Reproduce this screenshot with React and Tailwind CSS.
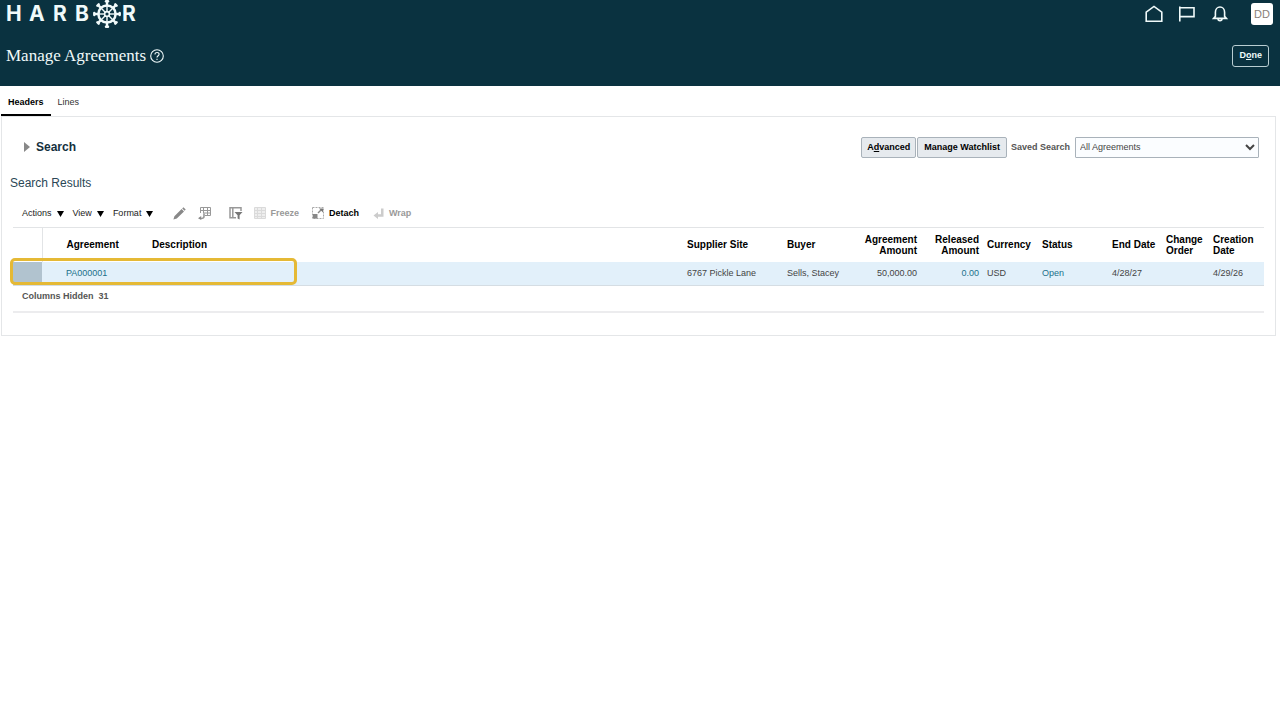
import { clsx } from 'clsx';

const COLUMNS = [
  { key: 'agreement', label: 'Agreement', width: 'w-[106px]', pad: 'pl-6', link: true },
  { key: 'description', label: 'Description' },
  { key: 'site', label: 'Supplier Site', width: 'w-[100px]' },
  { key: 'buyer', label: 'Buyer', width: 'w-[68px]' },
  { key: 'amount', label: 'Agreement Amount', width: 'w-[70px]', right: true },
  { key: 'released', label: 'Released Amount', width: 'w-[62px]', right: true, link: true },
  { key: 'currency', label: 'Currency', width: 'w-[55px]' },
  { key: 'status', label: 'Status', width: 'w-[70px]', link: true },
  { key: 'endDate', label: 'End Date', width: 'w-[54px]' },
  { key: 'changeOrder', label: 'Change Order', width: 'w-[47px]' },
  { key: 'created', label: 'Creation Date', width: 'w-[55px]' },
];

const AGREEMENTS = [
  {
    agreement: 'PA000001',
    description: '',
    site: '6767 Pickle Lane',
    buyer: 'Sells, Stacey',
    amount: '50,000.00',
    released: '0.00',
    currency: 'USD',
    status: 'Open',
    endDate: '4/28/27',
    changeOrder: '',
    created: '4/29/26',
  },
];

const SPOKES = [0, 45, 90, 135, 180, 225, 270, 315];

function HelmIcon() {
  return (
    <svg width="30" height="28" viewBox="-15 -14 30 28" fill="none" stroke="currentColor" aria-hidden="true">
      <circle r="8.6" strokeWidth="2.5" />
      <circle r="2.4" strokeWidth="1.6" />
      {SPOKES.map((deg) => (
        <g key={deg} transform={`rotate(${deg})`}>
          <path d="M0 -2.6V-8" strokeWidth="1.4" />
          <path d="M0 -8V-13.2" strokeWidth="2.4" />
          <path d="M-1 -12.7H1" strokeWidth="2.4" strokeLinecap="round" />
        </g>
      ))}
    </svg>
  );
}

function Logo() {
  return (
    <div className="flex h-7 items-center font-['Inter',sans-serif] text-[21px] leading-7 font-bold">
      <span className="w-[23px]">H</span>
      <span className="w-6">A</span>
      <span className="w-[22px]">R</span>
      <span className="w-[17px]">B</span>
      <HelmIcon />
      <span>R</span>
    </div>
  );
}

function HeaderIcon({ label, children }) {
  return (
    <button type="button" aria-label={label}>
      <svg width="20" height="20" viewBox="0 0 20 20" fill="none" stroke="currentColor" strokeWidth="1.6">
        {children}
      </svg>
    </button>
  );
}

function Header() {
  return (
    <header className="h-[86px] bg-[#0a3240] text-[#f0fafa]">
      <div className="flex h-7 items-center justify-between pr-[7px] pl-[6px]">
        <Logo />
        <div className="flex items-center">
          <div className="flex items-center gap-[13px]">
            <HeaderIcon label="Home">
              <path d="M2.2 17.3V8.2L10 2.4L17.8 8.2V17.3Z" />
            </HeaderIcon>
            <HeaderIcon label="Favorites">
              <path d="M2.8 2.6V17.4M2.8 3.8H17V12.6H2.8" />
            </HeaderIcon>
            <HeaderIcon label="Notifications">
              <path d="M3.6 14.4H16.4L14.6 12.4V8.2C14.6 5.2 12.6 3 10 3S5.4 5.2 5.4 8.2V12.4Z" />
              <path d="M8 14.8C8 17.2 12 17.2 12 14.8" />
            </HeaderIcon>
          </div>
          <button
            type="button"
            aria-label="Account DD"
            className="ml-[21px] h-[22px] w-[22px] rounded-[3px] bg-white text-[11px] text-[#8a7f78]"
          >
            DD
          </button>
        </div>
      </div>
      <div className="flex h-14 items-center justify-between pr-[11px] pl-[6px]">
        <h1 className="flex items-center gap-1 font-['Liberation_Serif',serif] text-[17px] leading-5">
          Manage Agreements
          <button type="button" aria-label="Help">
            <svg width="14" height="14" viewBox="0 0 14 14" fill="none" stroke="currentColor" strokeWidth="1.1">
              <circle cx="7" cy="7" r="6.3" />
              <path d="M5 5.4C5 2.8 9.1 2.9 9.1 5.3C9.1 6.7 7 6.8 7 8.6M7 9.8V11" />
            </svg>
          </button>
        </h1>
        <button type="button" className="h-[22px] rounded-[3px] border border-[#b9cdd2] px-[6px] pb-[2px] font-bold">
          D<u>o</u>ne
        </button>
      </div>
    </header>
  );
}

function MenuButton({ children }) {
  return (
    <button type="button" className="flex items-center gap-[5px] text-[#222]">
      {children}
      <svg className="mt-[2px]" width="7" height="6" viewBox="0 0 7 6" aria-hidden="true">
        <path d="M0 0H7L3.5 6Z" fill="#000" />
      </svg>
    </button>
  );
}

function Toolbar() {
  return (
    <div className="flex h-7 items-center pl-[9px]">
      <div className="flex gap-[9px]">
        <MenuButton>Actions</MenuButton>
        <MenuButton>View</MenuButton>
        <MenuButton>Format</MenuButton>
      </div>
      <button type="button" aria-label="Edit" className="ml-5">
        <svg width="13" height="13" viewBox="0 0 13 13" fill="#888">
          <path d="M0.4 12.6L1.4 9.2L8.6 2L11 4.4L3.8 11.6ZM9.2 1.4L10.4 0.3L12.7 2.6L11.6 3.8Z" />
        </svg>
      </button>
      <button type="button" aria-label="Export to Excel" className="ml-3">
        <svg width="13" height="13" viewBox="0 0 13 13" fill="none" stroke="#999">
          <path d="M2.5 6V0.5H12.5V8.5H7M2.5 3.5H12.5M5.5 0.5V6M9.5 0.5V8.5M5 6H12.5" />
          <path d="M6 6.5V9.5C6 11 5 11.5 3 11.5" strokeWidth="1.6" />
          <path d="M0 11.3L3.2 9V13Z" fill="#888" stroke="none" />
        </svg>
      </button>
      <button type="button" aria-label="Query By Example" className="ml-[18px]">
        <svg width="14" height="13" viewBox="0 0 14 13" fill="none" stroke="#999">
          <path d="M12 4V0.8H1V10.8H7M3.8 1V10.8" strokeWidth="1.5" />
          <path d="M5.5 5H13.5L10.6 8.3V12.6L8.6 11.4V8.3Z" fill="#777" stroke="none" />
        </svg>
      </button>
      <button type="button" disabled className="ml-[11px] flex items-center gap-1 font-bold text-[#999]">
        <svg width="12" height="12" viewBox="0 0 12 12" fill="#eee" stroke="#dadada" aria-hidden="true">
          <path d="M0.5 0.5H11.5V11.5H0.5ZM0.5 3.5H11.5M0.5 6.5H11.5M0.5 9.5H11.5M3.5 0.5V11.5M7.5 0.5V11.5" />
        </svg>
        Freeze
      </button>
      <button type="button" className="ml-[13px] flex items-center gap-1 font-bold text-black">
        <svg width="13" height="12" viewBox="0 0 13 12" fill="none" stroke="#aaa" aria-hidden="true">
          <path d="M0.5 0.5H11.5V11.5H0.5Z" strokeDasharray="2 1" />
          <path d="M1 7H5.5V11.5H1Z" fill="#888" stroke="none" />
          <path d="M6 6L9.5 2.5" stroke="#888" strokeWidth="1.5" />
          <path d="M7 1.5H11V5.5Z" fill="#777" stroke="none" />
        </svg>
        Detach
      </button>
      <button type="button" disabled className="ml-[14px] flex items-center gap-1 font-bold text-[#999]">
        <svg width="12" height="11" viewBox="0 0 12 11" fill="#ccc" aria-hidden="true">
          <path d="M0.5 7.5L5 4V6.2H8V0.5H10.5V8.8H5V11Z" />
        </svg>
        Wrap
      </button>
    </div>
  );
}

function ResultsTable() {
  return (
    <table className="w-full table-fixed border-t border-[#e2e4e6] text-left">
      <thead>
        <tr className="h-[34px] text-[10px] leading-[11px] text-black">
          <th className="w-[29px] border-r border-[#e2e4e6]" aria-label="Row" />
          {COLUMNS.map((col) => (
            <th
              key={col.key}
              scope="col"
              className={clsx('p-0 font-bold', col.width, col.pad ?? 'pl-1', col.right && 'pr-1 text-right')}
            >
              {col.label}
            </th>
          ))}
        </tr>
      </thead>
      <tbody>
        {AGREEMENTS.map((row) => (
          <tr key={row.agreement} className="h-6 border-b border-[#d5dde3] bg-[#e2f0fa] text-[#444]">
            <td className="relative bg-[#b1c3cf] p-0">
              <span className="pointer-events-none absolute -top-1 -left-[3px] h-[27px] w-[287px] rounded-[5px] border-3 border-[#e5b935]" />
            </td>
            {COLUMNS.map((col) => (
              <td
                key={col.key}
                className={clsx('p-0 whitespace-nowrap', col.pad ?? 'pl-1', col.right && 'pr-1 text-right')}
              >
                {col.link ? (
                  <a href="#" className="text-[#21708a]">
                    {row[col.key]}
                  </a>
                ) : (
                  row[col.key]
                )}
              </td>
            ))}
          </tr>
        ))}
      </tbody>
    </table>
  );
}

export default function App() {
  return (
    <div className="min-h-screen bg-white font-['Liberation_Sans',Arial,sans-serif] text-[9px] leading-3">
      <Header />
      <main className="pr-1 pl-[1px]">
        <nav className="flex h-[30px] items-stretch gap-[7px]">
          <a href="#" className="flex items-center border-b-2 border-black px-[7px] pt-1 font-bold text-black">
            Headers
          </a>
          <a href="#" className="flex items-center border-b-2 border-transparent pt-1 text-[#333]">
            Lines
          </a>
        </nav>
        <section className="border border-[#e4e6e8] pr-[11px] pb-[22px] pl-[11px]">
          <div className="flex h-[60px] items-center justify-between pr-[5px] pl-[11px]">
            <h2 className="text-[12px] font-bold text-[#14303d]">
              <button type="button" className="flex items-center gap-[6px]">
                <svg width="6" height="10" viewBox="0 0 6 10" aria-hidden="true">
                  <path d="M0 0L6 5L0 10Z" fill="#888" />
                </svg>
                Search
              </button>
            </h2>
            <div className="flex items-center">
              <button
                type="button"
                className="h-[21px] rounded-[2px] border border-[#a9b2ba] bg-[#e6eaee] px-[5px] font-bold text-black"
              >
                A<u>d</u>vanced
              </button>
              <button
                type="button"
                className="ml-px h-[21px] rounded-[2px] border border-[#a9b2ba] bg-[#e6eaee] px-[6px] font-bold text-black"
              >
                Manage Watchlist
              </button>
              <label htmlFor="saved-search" className="ml-1 font-bold text-[#555]">
                Saved Search
              </label>
              <select
                id="saved-search"
                className="ml-[5px] h-[21px] w-[184px] rounded-[1px] border border-[#a9b2ba] bg-[#fbfdff] text-[#444]"
              >
                <option>All Agreements</option>
              </select>
            </div>
          </div>
          <h3 className="-ml-[3px] flex h-[22px] items-start text-[12px] text-[#2b4756]">Search Results</h3>
          <Toolbar />
          <ResultsTable />
          <p className="flex h-[27px] items-center gap-[5px] border-b-2 border-[#ececee] pb-[5px] pl-[9px] font-bold text-[#555]">
            <span>Columns Hidden</span>
            <span>31</span>
          </p>
        </section>
      </main>
    </div>
  );
}
